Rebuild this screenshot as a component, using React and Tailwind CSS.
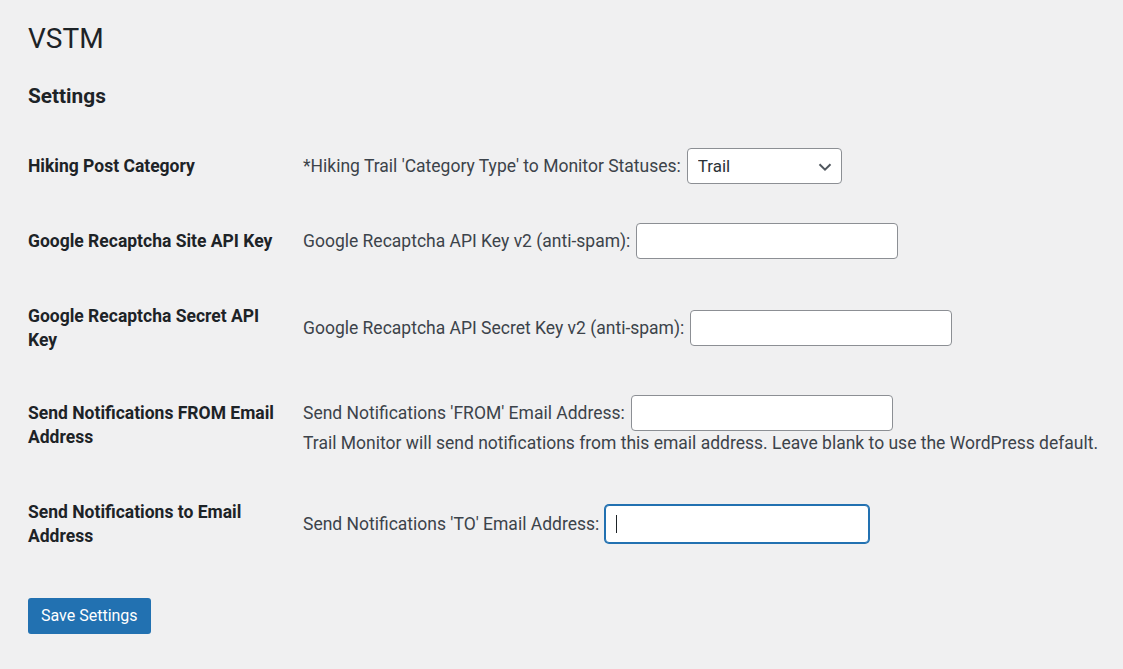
import React from "react";

const inputClass =
  "w-[262px] h-[36px] px-2 bg-white border border-[#8c8f94] rounded-[4px] text-[16px] text-[#2c3338] outline-none";

function Row({ label, height, children }) {
  return (
    <div className={`flex items-center ${height}`}>
      <div className="w-[275px] shrink-0 pr-[20px] text-[17.5px] leading-[24px] font-bold text-[#1d2327]">
        {label}
      </div>
      <div className="flex-1 text-[17.5px] leading-[24px] text-[#3c434a]">{children}</div>
    </div>
  );
}

export default function App() {
  return (
    <div
      className="min-h-screen bg-[#f0f0f1] px-[28px] pb-10"
      style={{ fontFamily: "Roboto, 'Noto Sans', sans-serif" }}
    >
      {/* Page title */}
      <h1 className="pt-[21px] text-[28px] leading-[36px] font-normal text-[#1d2327]">VSTM</h1>
      <h2 className="mt-[26px] text-[20.8px] leading-[27px] font-bold text-[#1d2327]">Settings</h2>

      {/* Settings table */}
      <div className="mt-[18px]">
        <Row label="Hiking Post Category" height="h-[75px]">
          <div className="flex items-center gap-[6px]">
            <span>*Hiking Trail 'Category Type' to Monitor Statuses:</span>
            <div className="relative">
              <select
                className="appearance-none w-[155px] h-[36px] pl-[10px] pr-6 bg-white border border-[#8c8f94] rounded-[4px] text-[17px] text-[#2c3338] outline-none"
                defaultValue="Trail"
              >
                <option>Trail</option>
              </select>
              <svg
                className="absolute right-[10px] top-[15px] pointer-events-none"
                width="14"
                height="8"
                viewBox="0 0 14 8"
                fill="none"
              >
                <path d="M1.5 1.2 L7 6.6 L12.5 1.2" stroke="#50575e" strokeWidth="2" />
              </svg>
            </div>
          </div>
        </Row>

        <Row label="Google Recaptcha Site API Key" height="h-[76px]">
          <div className="flex items-center gap-[6px]">
            <span>Google Recaptcha API Key v2 (anti-spam):</span>
            <input type="text" className={inputClass} />
          </div>
        </Row>

        <Row label="Google Recaptcha Secret API Key" height="h-[97px]">
          <div className="flex items-center gap-[6px]">
            <span>Google Recaptcha API Secret Key v2 (anti-spam):</span>
            <input type="text" className={inputClass} />
          </div>
        </Row>

        <Row label="Send Notifications FROM Email Address" height="h-[98px]">
          <div className="flex items-center gap-[6px]">
            <span>Send Notifications 'FROM' Email Address:</span>
            <input type="text" className={inputClass} />
          </div>
          <p className="whitespace-nowrap">
            Trail Monitor will send notifications from this email address. Leave blank to use the WordPress default.
          </p>
        </Row>

        <Row label="Send Notifications to Email Address" height="h-[99px]">
          <div className="flex items-center gap-[6px]">
            <span>Send Notifications 'TO' Email Address:</span>
            <div className="relative">
              <input
                type="text"
                className="w-[264px] h-[38px] px-2 bg-white border border-[#2271b1] rounded-[4px] shadow-[0_0_0_1px_#2271b1] text-[16px] outline-none"
              />
              <span className="absolute left-[11px] top-[10px] w-[1px] h-[18px] bg-[#1d2327]" />
            </div>
          </div>
        </Row>
      </div>

      <button className="mt-[25px] h-[36px] px-[13px] bg-[#2271b1] rounded-[3px] text-white text-[16px] leading-[34px]">
        Save Settings
      </button>
    </div>
  );
}
